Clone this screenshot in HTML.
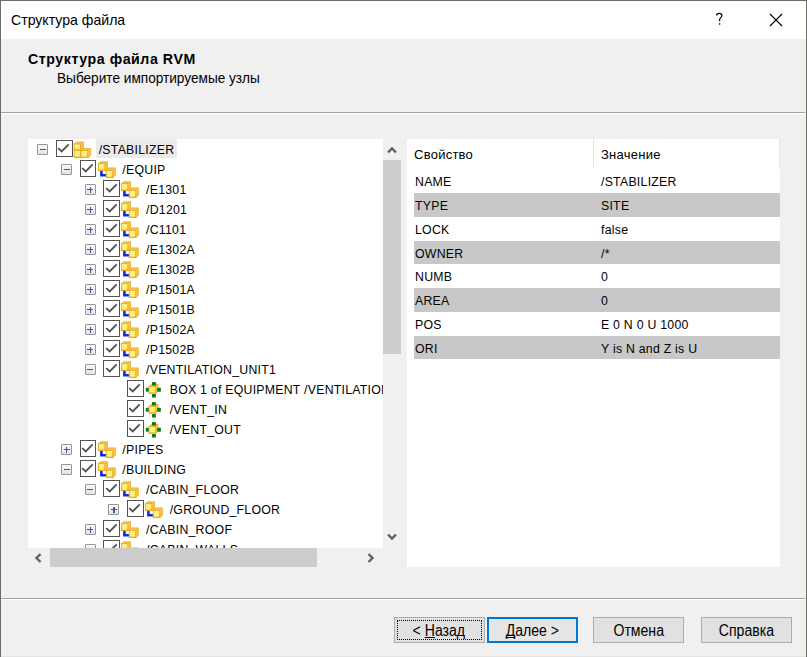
<!DOCTYPE html>
<html><head><meta charset="utf-8">
<style>
*{margin:0;padding:0;box-sizing:border-box}
html,body{width:807px;height:657px;overflow:hidden;background:#f0f0f0}
body{position:relative;font-family:"Liberation Sans",sans-serif;color:#000}
.abs{position:absolute}
#win{position:absolute;left:0;top:0;width:807px;height:657px;background:#f0f0f0;border-left:1px solid #6d6e69;border-right:1px solid #6d6e69;border-top:1px solid #6d6e69}
#title{position:absolute;left:1px;top:1px;width:805px;height:38px;background:#fff}
#ttext{position:absolute;left:11px;top:10.8px;font-size:15px;color:#000;white-space:nowrap;transform:scaleX(0.94);transform-origin:0 0}
#help{position:absolute;left:715px;top:10.5px;font-size:16px}
#close{position:absolute;left:769px;top:13px}
#hdr1{position:absolute;left:28px;top:51px;font-size:14.2px;letter-spacing:0.55px;font-weight:bold;white-space:nowrap;color:#000}
#hdr2{position:absolute;left:57px;top:70px;font-size:14.5px;letter-spacing:0px;white-space:nowrap;color:#000;transform:scaleX(0.94);transform-origin:0 0}
.sep{position:absolute;left:1px;width:803.5px;height:2px;border-top:1px solid #a0a0a0;border-bottom:1px solid #fff}
#tree{position:absolute;left:28px;top:139px;width:354.5px;height:409px;background:#fff;overflow:hidden}
.row{position:absolute;left:0;width:1000px;height:20px}
.ex{position:absolute;width:11px;height:11px;border:1px solid #969696;border-radius:1px;background:linear-gradient(#fafafc,#e2e2ea)}
.ex .h{position:absolute;left:1.5px;top:3.9px;width:6px;height:1.45px;background:#4a5688}
.ex .v{position:absolute;left:3.8px;top:1.6px;width:1.45px;height:6px;background:#4a5688}
.cb{position:absolute;width:16.6px;height:16.8px;border:1.8px solid #545454;background:#fff}
.cb svg{position:absolute;left:-1.8px;top:-1.8px}
.icw{position:absolute;width:22px;height:20px}
.ic{display:block}
.tx{position:absolute;top:0.2px;height:19.2px;line-height:23px;padding:0 2.5px;font-size:12.3px;letter-spacing:0.25px;white-space:nowrap;color:#000;overflow:hidden}
.tx.sel{background:#ebebeb}
#vsb{position:absolute;left:382.5px;top:139px;width:18px;height:409px;background:#f0f0f0}
#vth{position:absolute;left:0;top:21px;width:18px;height:193.5px;background:#cdcdcd}
#hsb{position:absolute;left:28px;top:548px;width:355px;height:19px;background:#f0f0f0}
#hth{position:absolute;left:22px;top:0;width:267px;height:18.5px;background:#cdcdcd}
#grid{position:absolute;left:407px;top:139px;width:373px;height:428px;background:#fff;overflow:hidden}
.gh{position:absolute;top:0.5px;height:30px;font-size:13px;letter-spacing:0.25px;line-height:30px;white-space:nowrap}
.gdiv{position:absolute;top:0;width:1px;height:30px;background:#e5e5e5}
.pr{position:absolute;left:7px;width:365.5px;height:23.5px;font-size:12.3px;letter-spacing:0.25px;line-height:27.5px;white-space:nowrap}
.pr.g{background:#c8c8c8}
.pk{position:absolute;left:1px}
.pv{position:absolute;left:187px}
.btn{position:absolute;top:617px;height:26px;width:91px;background:#e1e1e1;border:1px solid #adadad;font-size:14px;text-align:center;line-height:24px;white-space:nowrap}
.btn.def{border:2px solid #0078d7;background:#e5e5e5;line-height:22px}
.bt{display:inline-block;position:relative;top:0.7px;font-size:16px;transform:scaleX(0.88);transform-origin:50% 50%}
.focus{position:absolute;left:2px;top:2px;right:2px;bottom:2px;border:1px dotted #000}
u{text-decoration:underline;text-underline-offset:1px;text-decoration-skip-ink:none}
</style></head><body>

<svg width="0" height="0" style="position:absolute">
<defs>
<linearGradient id="cg" x1="0" y1="0" x2="0" y2="1">
<stop offset="0" stop-color="#fff6a8"/><stop offset="0.55" stop-color="#ffe766"/><stop offset="1" stop-color="#f8c440"/>
</linearGradient>
</defs>
</svg>
<div id="win"></div>
<div id="title"></div>
<div id="ttext">Структура файла</div>
<svg style="position:absolute;left:710px;top:8px" width="20" height="22" viewBox="710 8 20 22"><path d="M716.6 15.6C716.6 14 717.7 13.3 719.2 13.3C720.8 13.3 721.9 14.2 721.9 15.6C721.9 17.5 719.6 17.9 719.6 19.9V21.3" fill="none" stroke="#000" stroke-width="1.15"/><rect x="719" y="23.2" width="1.25" height="1.5" fill="#000"/></svg>
<svg id="close" width="14" height="14" viewBox="0 0 14 14"><path d="M1 1L13 13M13 1L1 13" stroke="#000" stroke-width="1.1"/></svg>
<div id="hdr1">Структура файла RVM</div>
<div id="hdr2">Выберите импортируемые узлы</div>
<div class="sep" style="top:112px"></div>

<div id="tree">
<div class="row" style="top:0px"><div class="ex" style="left:9.4px;top:5px"><i class="h"></i></div><div class="cb" style="left:28.1px;top:1px"><svg width="16" height="16" viewBox="0 0 16 16"><path d="M3.2 9.1l3.5 3.3 7-7" fill="none" stroke="#525252" stroke-width="1.85"/></svg></div><div class="icw" style="left:45.1px;top:1px"><svg class="ic" width="22" height="20" viewBox="0 0 22 20"><path d="M1.1 10.2L1.1 10.2H7.7V17.4L7.7 17.4Z" fill="#f7c845" stroke="#e6a426" stroke-width="0.8" stroke-linejoin="round"/><rect x="1.1" y="10.2" width="6.6" height="7.2" fill="url(#cg)" stroke="#eaa52a" stroke-width="0.9"/><rect x="2.4" y="11.5" width="4" height="4.6" fill="#fff27c"/><path d="M1.1 4L3.7 2H10.3V8.2L7.7 10.2Z" fill="#f7c845" stroke="#e6a426" stroke-width="0.8" stroke-linejoin="round"/><rect x="1.1" y="4" width="6.6" height="6.2" fill="url(#cg)" stroke="#eaa52a" stroke-width="0.9"/><rect x="2.4" y="5.3" width="4" height="3.6" fill="#fff27c"/><path d="M7.9 10.4L10.6 8.4H17.5V15.6L14.8 17.6Z" fill="#f7c845" stroke="#e6a426" stroke-width="0.8" stroke-linejoin="round"/><rect x="7.9" y="10.4" width="6.9" height="7.2" fill="url(#cg)" stroke="#eaa52a" stroke-width="0.9"/><rect x="9.2" y="11.7" width="4.3" height="4.6" fill="#fff27c"/></svg></div><div class="tx sel" style="left:68.2px">/STABILIZER</div></div><div class="row" style="top:20px"><div class="ex" style="left:33.07px;top:5px"><i class="h"></i></div><div class="cb" style="left:51.77px;top:1px"><svg width="16" height="16" viewBox="0 0 16 16"><path d="M3.2 9.1l3.5 3.3 7-7" fill="none" stroke="#525252" stroke-width="1.85"/></svg></div><div class="icw" style="left:68.77px;top:1px"><svg class="ic" width="22" height="20" viewBox="0 0 22 20"><path d="M4.4 11.3V15.3H8.6" fill="none" stroke="#0b2fe0" stroke-width="2.6" stroke-linecap="square"/><path d="M1.4 3.7L4 1.8H10.5V8.7L7.9 10.6Z" fill="#f7c845" stroke="#e6a426" stroke-width="0.8" stroke-linejoin="round"/><rect x="1.4" y="3.7" width="6.5" height="6.9" fill="url(#cg)" stroke="#eaa52a" stroke-width="0.9"/><rect x="2.7" y="5" width="3.9" height="4.3" fill="#fff27c"/><path d="M9.2 10.3L11.7 7.9H18.3V15.2L15.8 17.6Z" fill="#f7c845" stroke="#e6a426" stroke-width="0.8" stroke-linejoin="round"/><rect x="9.2" y="10.3" width="6.6" height="7.3" fill="url(#cg)" stroke="#eaa52a" stroke-width="0.9"/><rect x="10.5" y="11.6" width="4" height="4.7" fill="#fff27c"/></svg></div><div class="tx" style="left:91.87px">/EQUIP</div></div><div class="row" style="top:40px"><div class="ex" style="left:56.74px;top:5px"><i class="h"></i><i class="v"></i></div><div class="cb" style="left:75.44px;top:1px"><svg width="16" height="16" viewBox="0 0 16 16"><path d="M3.2 9.1l3.5 3.3 7-7" fill="none" stroke="#525252" stroke-width="1.85"/></svg></div><div class="icw" style="left:92.44px;top:1px"><svg class="ic" width="22" height="20" viewBox="0 0 22 20"><path d="M4.4 11.3V15.3H8.6" fill="none" stroke="#0b2fe0" stroke-width="2.6" stroke-linecap="square"/><path d="M1.4 3.7L4 1.8H10.5V8.7L7.9 10.6Z" fill="#f7c845" stroke="#e6a426" stroke-width="0.8" stroke-linejoin="round"/><rect x="1.4" y="3.7" width="6.5" height="6.9" fill="url(#cg)" stroke="#eaa52a" stroke-width="0.9"/><rect x="2.7" y="5" width="3.9" height="4.3" fill="#fff27c"/><path d="M9.2 10.3L11.7 7.9H18.3V15.2L15.8 17.6Z" fill="#f7c845" stroke="#e6a426" stroke-width="0.8" stroke-linejoin="round"/><rect x="9.2" y="10.3" width="6.6" height="7.3" fill="url(#cg)" stroke="#eaa52a" stroke-width="0.9"/><rect x="10.5" y="11.6" width="4" height="4.7" fill="#fff27c"/></svg></div><div class="tx" style="left:115.54px">/E1301</div></div><div class="row" style="top:60px"><div class="ex" style="left:56.74px;top:5px"><i class="h"></i><i class="v"></i></div><div class="cb" style="left:75.44px;top:1px"><svg width="16" height="16" viewBox="0 0 16 16"><path d="M3.2 9.1l3.5 3.3 7-7" fill="none" stroke="#525252" stroke-width="1.85"/></svg></div><div class="icw" style="left:92.44px;top:1px"><svg class="ic" width="22" height="20" viewBox="0 0 22 20"><path d="M4.4 11.3V15.3H8.6" fill="none" stroke="#0b2fe0" stroke-width="2.6" stroke-linecap="square"/><path d="M1.4 3.7L4 1.8H10.5V8.7L7.9 10.6Z" fill="#f7c845" stroke="#e6a426" stroke-width="0.8" stroke-linejoin="round"/><rect x="1.4" y="3.7" width="6.5" height="6.9" fill="url(#cg)" stroke="#eaa52a" stroke-width="0.9"/><rect x="2.7" y="5" width="3.9" height="4.3" fill="#fff27c"/><path d="M9.2 10.3L11.7 7.9H18.3V15.2L15.8 17.6Z" fill="#f7c845" stroke="#e6a426" stroke-width="0.8" stroke-linejoin="round"/><rect x="9.2" y="10.3" width="6.6" height="7.3" fill="url(#cg)" stroke="#eaa52a" stroke-width="0.9"/><rect x="10.5" y="11.6" width="4" height="4.7" fill="#fff27c"/></svg></div><div class="tx" style="left:115.54px">/D1201</div></div><div class="row" style="top:80px"><div class="ex" style="left:56.74px;top:5px"><i class="h"></i><i class="v"></i></div><div class="cb" style="left:75.44px;top:1px"><svg width="16" height="16" viewBox="0 0 16 16"><path d="M3.2 9.1l3.5 3.3 7-7" fill="none" stroke="#525252" stroke-width="1.85"/></svg></div><div class="icw" style="left:92.44px;top:1px"><svg class="ic" width="22" height="20" viewBox="0 0 22 20"><path d="M4.4 11.3V15.3H8.6" fill="none" stroke="#0b2fe0" stroke-width="2.6" stroke-linecap="square"/><path d="M1.4 3.7L4 1.8H10.5V8.7L7.9 10.6Z" fill="#f7c845" stroke="#e6a426" stroke-width="0.8" stroke-linejoin="round"/><rect x="1.4" y="3.7" width="6.5" height="6.9" fill="url(#cg)" stroke="#eaa52a" stroke-width="0.9"/><rect x="2.7" y="5" width="3.9" height="4.3" fill="#fff27c"/><path d="M9.2 10.3L11.7 7.9H18.3V15.2L15.8 17.6Z" fill="#f7c845" stroke="#e6a426" stroke-width="0.8" stroke-linejoin="round"/><rect x="9.2" y="10.3" width="6.6" height="7.3" fill="url(#cg)" stroke="#eaa52a" stroke-width="0.9"/><rect x="10.5" y="11.6" width="4" height="4.7" fill="#fff27c"/></svg></div><div class="tx" style="left:115.54px">/C1101</div></div><div class="row" style="top:100px"><div class="ex" style="left:56.74px;top:5px"><i class="h"></i><i class="v"></i></div><div class="cb" style="left:75.44px;top:1px"><svg width="16" height="16" viewBox="0 0 16 16"><path d="M3.2 9.1l3.5 3.3 7-7" fill="none" stroke="#525252" stroke-width="1.85"/></svg></div><div class="icw" style="left:92.44px;top:1px"><svg class="ic" width="22" height="20" viewBox="0 0 22 20"><path d="M4.4 11.3V15.3H8.6" fill="none" stroke="#0b2fe0" stroke-width="2.6" stroke-linecap="square"/><path d="M1.4 3.7L4 1.8H10.5V8.7L7.9 10.6Z" fill="#f7c845" stroke="#e6a426" stroke-width="0.8" stroke-linejoin="round"/><rect x="1.4" y="3.7" width="6.5" height="6.9" fill="url(#cg)" stroke="#eaa52a" stroke-width="0.9"/><rect x="2.7" y="5" width="3.9" height="4.3" fill="#fff27c"/><path d="M9.2 10.3L11.7 7.9H18.3V15.2L15.8 17.6Z" fill="#f7c845" stroke="#e6a426" stroke-width="0.8" stroke-linejoin="round"/><rect x="9.2" y="10.3" width="6.6" height="7.3" fill="url(#cg)" stroke="#eaa52a" stroke-width="0.9"/><rect x="10.5" y="11.6" width="4" height="4.7" fill="#fff27c"/></svg></div><div class="tx" style="left:115.54px">/E1302A</div></div><div class="row" style="top:120px"><div class="ex" style="left:56.74px;top:5px"><i class="h"></i><i class="v"></i></div><div class="cb" style="left:75.44px;top:1px"><svg width="16" height="16" viewBox="0 0 16 16"><path d="M3.2 9.1l3.5 3.3 7-7" fill="none" stroke="#525252" stroke-width="1.85"/></svg></div><div class="icw" style="left:92.44px;top:1px"><svg class="ic" width="22" height="20" viewBox="0 0 22 20"><path d="M4.4 11.3V15.3H8.6" fill="none" stroke="#0b2fe0" stroke-width="2.6" stroke-linecap="square"/><path d="M1.4 3.7L4 1.8H10.5V8.7L7.9 10.6Z" fill="#f7c845" stroke="#e6a426" stroke-width="0.8" stroke-linejoin="round"/><rect x="1.4" y="3.7" width="6.5" height="6.9" fill="url(#cg)" stroke="#eaa52a" stroke-width="0.9"/><rect x="2.7" y="5" width="3.9" height="4.3" fill="#fff27c"/><path d="M9.2 10.3L11.7 7.9H18.3V15.2L15.8 17.6Z" fill="#f7c845" stroke="#e6a426" stroke-width="0.8" stroke-linejoin="round"/><rect x="9.2" y="10.3" width="6.6" height="7.3" fill="url(#cg)" stroke="#eaa52a" stroke-width="0.9"/><rect x="10.5" y="11.6" width="4" height="4.7" fill="#fff27c"/></svg></div><div class="tx" style="left:115.54px">/E1302B</div></div><div class="row" style="top:140px"><div class="ex" style="left:56.74px;top:5px"><i class="h"></i><i class="v"></i></div><div class="cb" style="left:75.44px;top:1px"><svg width="16" height="16" viewBox="0 0 16 16"><path d="M3.2 9.1l3.5 3.3 7-7" fill="none" stroke="#525252" stroke-width="1.85"/></svg></div><div class="icw" style="left:92.44px;top:1px"><svg class="ic" width="22" height="20" viewBox="0 0 22 20"><path d="M4.4 11.3V15.3H8.6" fill="none" stroke="#0b2fe0" stroke-width="2.6" stroke-linecap="square"/><path d="M1.4 3.7L4 1.8H10.5V8.7L7.9 10.6Z" fill="#f7c845" stroke="#e6a426" stroke-width="0.8" stroke-linejoin="round"/><rect x="1.4" y="3.7" width="6.5" height="6.9" fill="url(#cg)" stroke="#eaa52a" stroke-width="0.9"/><rect x="2.7" y="5" width="3.9" height="4.3" fill="#fff27c"/><path d="M9.2 10.3L11.7 7.9H18.3V15.2L15.8 17.6Z" fill="#f7c845" stroke="#e6a426" stroke-width="0.8" stroke-linejoin="round"/><rect x="9.2" y="10.3" width="6.6" height="7.3" fill="url(#cg)" stroke="#eaa52a" stroke-width="0.9"/><rect x="10.5" y="11.6" width="4" height="4.7" fill="#fff27c"/></svg></div><div class="tx" style="left:115.54px">/P1501A</div></div><div class="row" style="top:160px"><div class="ex" style="left:56.74px;top:5px"><i class="h"></i><i class="v"></i></div><div class="cb" style="left:75.44px;top:1px"><svg width="16" height="16" viewBox="0 0 16 16"><path d="M3.2 9.1l3.5 3.3 7-7" fill="none" stroke="#525252" stroke-width="1.85"/></svg></div><div class="icw" style="left:92.44px;top:1px"><svg class="ic" width="22" height="20" viewBox="0 0 22 20"><path d="M4.4 11.3V15.3H8.6" fill="none" stroke="#0b2fe0" stroke-width="2.6" stroke-linecap="square"/><path d="M1.4 3.7L4 1.8H10.5V8.7L7.9 10.6Z" fill="#f7c845" stroke="#e6a426" stroke-width="0.8" stroke-linejoin="round"/><rect x="1.4" y="3.7" width="6.5" height="6.9" fill="url(#cg)" stroke="#eaa52a" stroke-width="0.9"/><rect x="2.7" y="5" width="3.9" height="4.3" fill="#fff27c"/><path d="M9.2 10.3L11.7 7.9H18.3V15.2L15.8 17.6Z" fill="#f7c845" stroke="#e6a426" stroke-width="0.8" stroke-linejoin="round"/><rect x="9.2" y="10.3" width="6.6" height="7.3" fill="url(#cg)" stroke="#eaa52a" stroke-width="0.9"/><rect x="10.5" y="11.6" width="4" height="4.7" fill="#fff27c"/></svg></div><div class="tx" style="left:115.54px">/P1501B</div></div><div class="row" style="top:180px"><div class="ex" style="left:56.74px;top:5px"><i class="h"></i><i class="v"></i></div><div class="cb" style="left:75.44px;top:1px"><svg width="16" height="16" viewBox="0 0 16 16"><path d="M3.2 9.1l3.5 3.3 7-7" fill="none" stroke="#525252" stroke-width="1.85"/></svg></div><div class="icw" style="left:92.44px;top:1px"><svg class="ic" width="22" height="20" viewBox="0 0 22 20"><path d="M4.4 11.3V15.3H8.6" fill="none" stroke="#0b2fe0" stroke-width="2.6" stroke-linecap="square"/><path d="M1.4 3.7L4 1.8H10.5V8.7L7.9 10.6Z" fill="#f7c845" stroke="#e6a426" stroke-width="0.8" stroke-linejoin="round"/><rect x="1.4" y="3.7" width="6.5" height="6.9" fill="url(#cg)" stroke="#eaa52a" stroke-width="0.9"/><rect x="2.7" y="5" width="3.9" height="4.3" fill="#fff27c"/><path d="M9.2 10.3L11.7 7.9H18.3V15.2L15.8 17.6Z" fill="#f7c845" stroke="#e6a426" stroke-width="0.8" stroke-linejoin="round"/><rect x="9.2" y="10.3" width="6.6" height="7.3" fill="url(#cg)" stroke="#eaa52a" stroke-width="0.9"/><rect x="10.5" y="11.6" width="4" height="4.7" fill="#fff27c"/></svg></div><div class="tx" style="left:115.54px">/P1502A</div></div><div class="row" style="top:200px"><div class="ex" style="left:56.74px;top:5px"><i class="h"></i><i class="v"></i></div><div class="cb" style="left:75.44px;top:1px"><svg width="16" height="16" viewBox="0 0 16 16"><path d="M3.2 9.1l3.5 3.3 7-7" fill="none" stroke="#525252" stroke-width="1.85"/></svg></div><div class="icw" style="left:92.44px;top:1px"><svg class="ic" width="22" height="20" viewBox="0 0 22 20"><path d="M4.4 11.3V15.3H8.6" fill="none" stroke="#0b2fe0" stroke-width="2.6" stroke-linecap="square"/><path d="M1.4 3.7L4 1.8H10.5V8.7L7.9 10.6Z" fill="#f7c845" stroke="#e6a426" stroke-width="0.8" stroke-linejoin="round"/><rect x="1.4" y="3.7" width="6.5" height="6.9" fill="url(#cg)" stroke="#eaa52a" stroke-width="0.9"/><rect x="2.7" y="5" width="3.9" height="4.3" fill="#fff27c"/><path d="M9.2 10.3L11.7 7.9H18.3V15.2L15.8 17.6Z" fill="#f7c845" stroke="#e6a426" stroke-width="0.8" stroke-linejoin="round"/><rect x="9.2" y="10.3" width="6.6" height="7.3" fill="url(#cg)" stroke="#eaa52a" stroke-width="0.9"/><rect x="10.5" y="11.6" width="4" height="4.7" fill="#fff27c"/></svg></div><div class="tx" style="left:115.54px">/P1502B</div></div><div class="row" style="top:220px"><div class="ex" style="left:56.74px;top:5px"><i class="h"></i></div><div class="cb" style="left:75.44px;top:1px"><svg width="16" height="16" viewBox="0 0 16 16"><path d="M3.2 9.1l3.5 3.3 7-7" fill="none" stroke="#525252" stroke-width="1.85"/></svg></div><div class="icw" style="left:92.44px;top:1px"><svg class="ic" width="22" height="20" viewBox="0 0 22 20"><path d="M4.4 11.3V15.3H8.6" fill="none" stroke="#0b2fe0" stroke-width="2.6" stroke-linecap="square"/><path d="M1.4 3.7L4 1.8H10.5V8.7L7.9 10.6Z" fill="#f7c845" stroke="#e6a426" stroke-width="0.8" stroke-linejoin="round"/><rect x="1.4" y="3.7" width="6.5" height="6.9" fill="url(#cg)" stroke="#eaa52a" stroke-width="0.9"/><rect x="2.7" y="5" width="3.9" height="4.3" fill="#fff27c"/><path d="M9.2 10.3L11.7 7.9H18.3V15.2L15.8 17.6Z" fill="#f7c845" stroke="#e6a426" stroke-width="0.8" stroke-linejoin="round"/><rect x="9.2" y="10.3" width="6.6" height="7.3" fill="url(#cg)" stroke="#eaa52a" stroke-width="0.9"/><rect x="10.5" y="11.6" width="4" height="4.7" fill="#fff27c"/></svg></div><div class="tx" style="left:115.54px">/VENTILATION_UNIT1</div></div><div class="row" style="top:240px"><div class="cb" style="left:99.11px;top:1px"><svg width="16" height="16" viewBox="0 0 16 16"><path d="M3.2 9.1l3.5 3.3 7-7" fill="none" stroke="#525252" stroke-width="1.85"/></svg></div><div class="icw" style="left:116.11px;top:1px"><svg class="ic" width="22" height="20" viewBox="0 0 22 20"><path d="M5 6.6L7.3 4.2H14V10.9L11.7 13.3Z" fill="#f7c845" stroke="#e6a426" stroke-width="0.8" stroke-linejoin="round"/><rect x="5" y="6.6" width="6.7" height="6.7" fill="url(#cg)" stroke="#eaa52a" stroke-width="0.9"/><rect x="6.3" y="7.9" width="4.1" height="4.1" fill="#fff27c"/><rect x="8" y="1.9" width="3.9" height="3.7" rx="0.6" fill="#0b7d12"/><rect x="8" y="13.9" width="3.9" height="3.7" rx="0.6" fill="#0b7d12"/><rect x="1.8" y="7.8" width="2.9" height="3.9" rx="0.6" fill="#0b7d12"/><rect x="13.2" y="7.8" width="3.7" height="3.9" rx="0.6" fill="#0b7d12"/></svg></div><div class="tx" style="left:139.21px">BOX 1 of EQUIPMENT /VENTILATION_UNIT1</div></div><div class="row" style="top:260px"><div class="cb" style="left:99.11px;top:1px"><svg width="16" height="16" viewBox="0 0 16 16"><path d="M3.2 9.1l3.5 3.3 7-7" fill="none" stroke="#525252" stroke-width="1.85"/></svg></div><div class="icw" style="left:116.11px;top:1px"><svg class="ic" width="22" height="20" viewBox="0 0 22 20"><path d="M5 6.6L7.3 4.2H14V10.9L11.7 13.3Z" fill="#f7c845" stroke="#e6a426" stroke-width="0.8" stroke-linejoin="round"/><rect x="5" y="6.6" width="6.7" height="6.7" fill="url(#cg)" stroke="#eaa52a" stroke-width="0.9"/><rect x="6.3" y="7.9" width="4.1" height="4.1" fill="#fff27c"/><rect x="8" y="1.9" width="3.9" height="3.7" rx="0.6" fill="#0b7d12"/><rect x="8" y="13.9" width="3.9" height="3.7" rx="0.6" fill="#0b7d12"/><rect x="1.8" y="7.8" width="2.9" height="3.9" rx="0.6" fill="#0b7d12"/><rect x="13.2" y="7.8" width="3.7" height="3.9" rx="0.6" fill="#0b7d12"/></svg></div><div class="tx" style="left:139.21px">/VENT_IN</div></div><div class="row" style="top:280px"><div class="cb" style="left:99.11px;top:1px"><svg width="16" height="16" viewBox="0 0 16 16"><path d="M3.2 9.1l3.5 3.3 7-7" fill="none" stroke="#525252" stroke-width="1.85"/></svg></div><div class="icw" style="left:116.11px;top:1px"><svg class="ic" width="22" height="20" viewBox="0 0 22 20"><path d="M5 6.6L7.3 4.2H14V10.9L11.7 13.3Z" fill="#f7c845" stroke="#e6a426" stroke-width="0.8" stroke-linejoin="round"/><rect x="5" y="6.6" width="6.7" height="6.7" fill="url(#cg)" stroke="#eaa52a" stroke-width="0.9"/><rect x="6.3" y="7.9" width="4.1" height="4.1" fill="#fff27c"/><rect x="8" y="1.9" width="3.9" height="3.7" rx="0.6" fill="#0b7d12"/><rect x="8" y="13.9" width="3.9" height="3.7" rx="0.6" fill="#0b7d12"/><rect x="1.8" y="7.8" width="2.9" height="3.9" rx="0.6" fill="#0b7d12"/><rect x="13.2" y="7.8" width="3.7" height="3.9" rx="0.6" fill="#0b7d12"/></svg></div><div class="tx" style="left:139.21px">/VENT_OUT</div></div><div class="row" style="top:300px"><div class="ex" style="left:33.07px;top:5px"><i class="h"></i><i class="v"></i></div><div class="cb" style="left:51.77px;top:1px"><svg width="16" height="16" viewBox="0 0 16 16"><path d="M3.2 9.1l3.5 3.3 7-7" fill="none" stroke="#525252" stroke-width="1.85"/></svg></div><div class="icw" style="left:68.77px;top:1px"><svg class="ic" width="22" height="20" viewBox="0 0 22 20"><path d="M4.4 11.3V15.3H8.6" fill="none" stroke="#0b2fe0" stroke-width="2.6" stroke-linecap="square"/><path d="M1.4 3.7L4 1.8H10.5V8.7L7.9 10.6Z" fill="#f7c845" stroke="#e6a426" stroke-width="0.8" stroke-linejoin="round"/><rect x="1.4" y="3.7" width="6.5" height="6.9" fill="url(#cg)" stroke="#eaa52a" stroke-width="0.9"/><rect x="2.7" y="5" width="3.9" height="4.3" fill="#fff27c"/><path d="M9.2 10.3L11.7 7.9H18.3V15.2L15.8 17.6Z" fill="#f7c845" stroke="#e6a426" stroke-width="0.8" stroke-linejoin="round"/><rect x="9.2" y="10.3" width="6.6" height="7.3" fill="url(#cg)" stroke="#eaa52a" stroke-width="0.9"/><rect x="10.5" y="11.6" width="4" height="4.7" fill="#fff27c"/></svg></div><div class="tx" style="left:91.87px">/PIPES</div></div><div class="row" style="top:320px"><div class="ex" style="left:33.07px;top:5px"><i class="h"></i></div><div class="cb" style="left:51.77px;top:1px"><svg width="16" height="16" viewBox="0 0 16 16"><path d="M3.2 9.1l3.5 3.3 7-7" fill="none" stroke="#525252" stroke-width="1.85"/></svg></div><div class="icw" style="left:68.77px;top:1px"><svg class="ic" width="22" height="20" viewBox="0 0 22 20"><path d="M4.4 11.3V15.3H8.6" fill="none" stroke="#0b2fe0" stroke-width="2.6" stroke-linecap="square"/><path d="M1.4 3.7L4 1.8H10.5V8.7L7.9 10.6Z" fill="#f7c845" stroke="#e6a426" stroke-width="0.8" stroke-linejoin="round"/><rect x="1.4" y="3.7" width="6.5" height="6.9" fill="url(#cg)" stroke="#eaa52a" stroke-width="0.9"/><rect x="2.7" y="5" width="3.9" height="4.3" fill="#fff27c"/><path d="M9.2 10.3L11.7 7.9H18.3V15.2L15.8 17.6Z" fill="#f7c845" stroke="#e6a426" stroke-width="0.8" stroke-linejoin="round"/><rect x="9.2" y="10.3" width="6.6" height="7.3" fill="url(#cg)" stroke="#eaa52a" stroke-width="0.9"/><rect x="10.5" y="11.6" width="4" height="4.7" fill="#fff27c"/></svg></div><div class="tx" style="left:91.87px">/BUILDING</div></div><div class="row" style="top:340px"><div class="ex" style="left:56.74px;top:5px"><i class="h"></i></div><div class="cb" style="left:75.44px;top:1px"><svg width="16" height="16" viewBox="0 0 16 16"><path d="M3.2 9.1l3.5 3.3 7-7" fill="none" stroke="#525252" stroke-width="1.85"/></svg></div><div class="icw" style="left:92.44px;top:1px"><svg class="ic" width="22" height="20" viewBox="0 0 22 20"><path d="M4.4 11.3V15.3H8.6" fill="none" stroke="#0b2fe0" stroke-width="2.6" stroke-linecap="square"/><path d="M1.4 3.7L4 1.8H10.5V8.7L7.9 10.6Z" fill="#f7c845" stroke="#e6a426" stroke-width="0.8" stroke-linejoin="round"/><rect x="1.4" y="3.7" width="6.5" height="6.9" fill="url(#cg)" stroke="#eaa52a" stroke-width="0.9"/><rect x="2.7" y="5" width="3.9" height="4.3" fill="#fff27c"/><path d="M9.2 10.3L11.7 7.9H18.3V15.2L15.8 17.6Z" fill="#f7c845" stroke="#e6a426" stroke-width="0.8" stroke-linejoin="round"/><rect x="9.2" y="10.3" width="6.6" height="7.3" fill="url(#cg)" stroke="#eaa52a" stroke-width="0.9"/><rect x="10.5" y="11.6" width="4" height="4.7" fill="#fff27c"/></svg></div><div class="tx" style="left:115.54px">/CABIN_FLOOR</div></div><div class="row" style="top:360px"><div class="ex" style="left:80.41px;top:5px"><i class="h"></i><i class="v"></i></div><div class="cb" style="left:99.11px;top:1px"><svg width="16" height="16" viewBox="0 0 16 16"><path d="M3.2 9.1l3.5 3.3 7-7" fill="none" stroke="#525252" stroke-width="1.85"/></svg></div><div class="icw" style="left:116.11px;top:1px"><svg class="ic" width="22" height="20" viewBox="0 0 22 20"><path d="M4.4 11.3V15.3H8.6" fill="none" stroke="#0b2fe0" stroke-width="2.6" stroke-linecap="square"/><path d="M1.4 3.7L4 1.8H10.5V8.7L7.9 10.6Z" fill="#f7c845" stroke="#e6a426" stroke-width="0.8" stroke-linejoin="round"/><rect x="1.4" y="3.7" width="6.5" height="6.9" fill="url(#cg)" stroke="#eaa52a" stroke-width="0.9"/><rect x="2.7" y="5" width="3.9" height="4.3" fill="#fff27c"/><path d="M9.2 10.3L11.7 7.9H18.3V15.2L15.8 17.6Z" fill="#f7c845" stroke="#e6a426" stroke-width="0.8" stroke-linejoin="round"/><rect x="9.2" y="10.3" width="6.6" height="7.3" fill="url(#cg)" stroke="#eaa52a" stroke-width="0.9"/><rect x="10.5" y="11.6" width="4" height="4.7" fill="#fff27c"/></svg></div><div class="tx" style="left:139.21px">/GROUND_FLOOR</div></div><div class="row" style="top:380px"><div class="ex" style="left:56.74px;top:5px"><i class="h"></i><i class="v"></i></div><div class="cb" style="left:75.44px;top:1px"><svg width="16" height="16" viewBox="0 0 16 16"><path d="M3.2 9.1l3.5 3.3 7-7" fill="none" stroke="#525252" stroke-width="1.85"/></svg></div><div class="icw" style="left:92.44px;top:1px"><svg class="ic" width="22" height="20" viewBox="0 0 22 20"><path d="M4.4 11.3V15.3H8.6" fill="none" stroke="#0b2fe0" stroke-width="2.6" stroke-linecap="square"/><path d="M1.4 3.7L4 1.8H10.5V8.7L7.9 10.6Z" fill="#f7c845" stroke="#e6a426" stroke-width="0.8" stroke-linejoin="round"/><rect x="1.4" y="3.7" width="6.5" height="6.9" fill="url(#cg)" stroke="#eaa52a" stroke-width="0.9"/><rect x="2.7" y="5" width="3.9" height="4.3" fill="#fff27c"/><path d="M9.2 10.3L11.7 7.9H18.3V15.2L15.8 17.6Z" fill="#f7c845" stroke="#e6a426" stroke-width="0.8" stroke-linejoin="round"/><rect x="9.2" y="10.3" width="6.6" height="7.3" fill="url(#cg)" stroke="#eaa52a" stroke-width="0.9"/><rect x="10.5" y="11.6" width="4" height="4.7" fill="#fff27c"/></svg></div><div class="tx" style="left:115.54px">/CABIN_ROOF</div></div><div class="row" style="top:400px"><div class="ex" style="left:56.74px;top:5px"><i class="h"></i></div><div class="cb" style="left:75.44px;top:1px"><svg width="16" height="16" viewBox="0 0 16 16"><path d="M3.2 9.1l3.5 3.3 7-7" fill="none" stroke="#525252" stroke-width="1.85"/></svg></div><div class="icw" style="left:92.44px;top:1px"><svg class="ic" width="22" height="20" viewBox="0 0 22 20"><path d="M4.4 11.3V15.3H8.6" fill="none" stroke="#0b2fe0" stroke-width="2.6" stroke-linecap="square"/><path d="M1.4 3.7L4 1.8H10.5V8.7L7.9 10.6Z" fill="#f7c845" stroke="#e6a426" stroke-width="0.8" stroke-linejoin="round"/><rect x="1.4" y="3.7" width="6.5" height="6.9" fill="url(#cg)" stroke="#eaa52a" stroke-width="0.9"/><rect x="2.7" y="5" width="3.9" height="4.3" fill="#fff27c"/><path d="M9.2 10.3L11.7 7.9H18.3V15.2L15.8 17.6Z" fill="#f7c845" stroke="#e6a426" stroke-width="0.8" stroke-linejoin="round"/><rect x="9.2" y="10.3" width="6.6" height="7.3" fill="url(#cg)" stroke="#eaa52a" stroke-width="0.9"/><rect x="10.5" y="11.6" width="4" height="4.7" fill="#fff27c"/></svg></div><div class="tx" style="left:115.54px">/CABIN_WALLS</div></div>
</div>
<div id="vsb"><div id="vth"></div>
<svg class="abs" style="left:4.5px;top:7px" width="10" height="8" viewBox="0 0 10 8"><path d="M1 6.5L5 2.5L9 6.5" fill="none" stroke="#606060" stroke-width="2.4"/></svg>
<svg class="abs" style="left:4.5px;top:394px" width="10" height="8" viewBox="0 0 10 8"><path d="M1 1.5L5 5.5L9 1.5" fill="none" stroke="#606060" stroke-width="2.4"/></svg>
</div>
<div id="hsb"><div id="hth"></div>
<svg class="abs" style="left:6px;top:5px" width="8" height="10" viewBox="0 0 8 10"><path d="M6.5 1L2.5 5L6.5 9" fill="none" stroke="#606060" stroke-width="2.4"/></svg>
<svg class="abs" style="left:339px;top:5px" width="8" height="10" viewBox="0 0 8 10"><path d="M1.5 1L5.5 5L1.5 9" fill="none" stroke="#606060" stroke-width="2.4"/></svg>
</div>
<div style="position:absolute;left:383px;top:548px;width:17px;height:19px;background:#f0f0f0"></div>

<div id="grid">
<div class="gh" style="left:7px">Свойство</div>
<div class="gdiv" style="left:186px"></div>
<div class="gh" style="left:194px">Значение</div>
<div class="gdiv" style="left:372px"></div>
<div class="pr" style="top:30.25px"><span class="pk">NAME</span><span class="pv">/STABILIZER</span></div><div class="pr g" style="top:54px"><span class="pk">TYPE</span><span class="pv">SITE</span></div><div class="pr" style="top:77.75px"><span class="pk">LOCK</span><span class="pv">false</span></div><div class="pr g" style="top:101.5px"><span class="pk">OWNER</span><span class="pv">/*</span></div><div class="pr" style="top:125.25px"><span class="pk">NUMB</span><span class="pv">0</span></div><div class="pr g" style="top:149px"><span class="pk">AREA</span><span class="pv">0</span></div><div class="pr" style="top:172.75px"><span class="pk">POS</span><span class="pv">E 0 N 0 U 1000</span></div><div class="pr g" style="top:196.5px"><span class="pk">ORI</span><span class="pv">Y is N and Z is U</span></div>
</div>

<div class="sep" style="top:598px"></div>
<div class="btn" style="left:393.5px"><div class="focus"></div><span class="bt">&lt; <u>Н</u>азад</span></div>
<div class="btn def" style="left:487px"><span class="bt"><u>Д</u>алее &gt;</span></div>
<div class="btn" style="left:593px"><span class="bt">Отмена</span></div>
<div class="btn" style="left:701px"><span class="bt">Справка</span></div>
<div style="position:absolute;left:1px;top:656px;width:805px;height:1px;background:#e3e3e3"></div>
</body></html>
